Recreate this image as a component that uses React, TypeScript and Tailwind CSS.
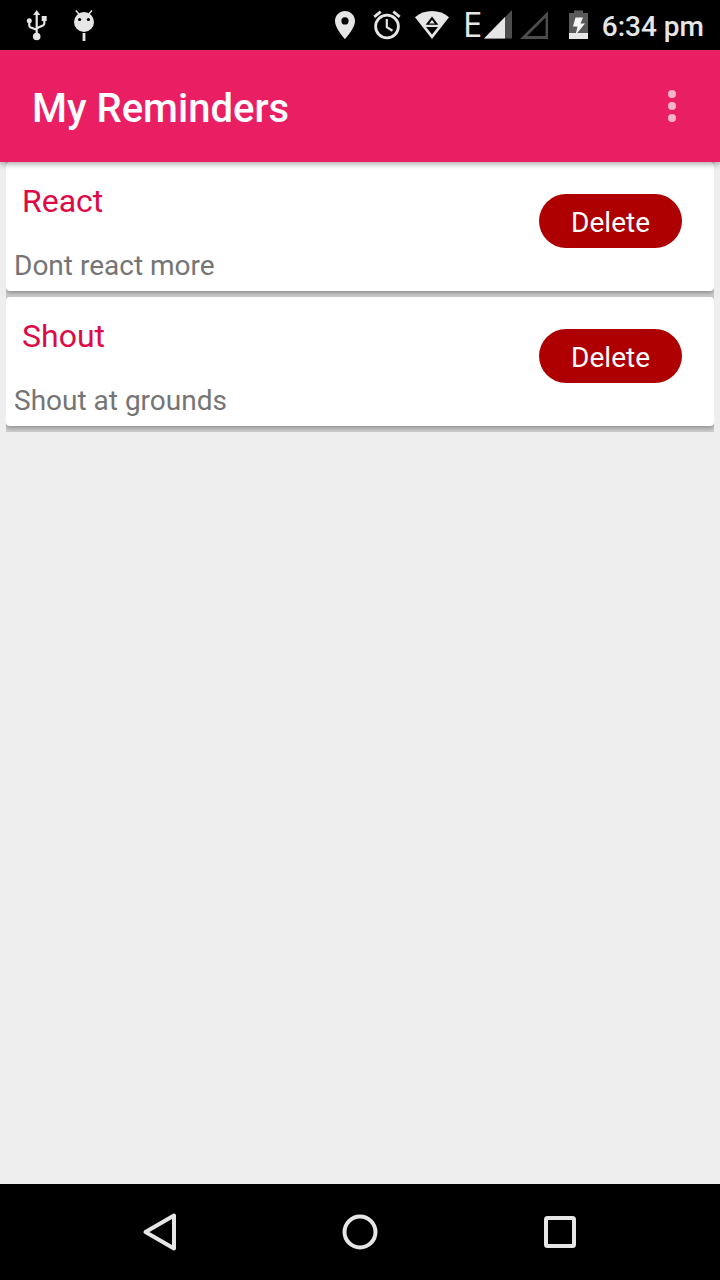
import { useState } from "react";

type Reminder = { id: number; title: string; note: string };

const initialReminders: Reminder[] = [
  { id: 1, title: "React", note: "Dont react more" },
  { id: 2, title: "Shout", note: "Shout at grounds" },
];

function StatusBar() {
  return (
    <div className="flex h-[50px] shrink-0 items-center bg-black pr-4 pl-6 text-[#e6e6e6]">
      <svg className="h-[50px] w-[26px]" viewBox="24 0 26 50" fill="none" stroke="currentColor" strokeWidth="2.2" aria-hidden="true">
        <path d="M36.7 14v20M29.3 21v4.5q0 1.2 1 1.7l6.2 2.6M44.300 19v4.500q0 1.200-1 1.700l-6.500 3" />
        <path d="M36.700 10l3.600 5h-7.200z" fill="currentColor" stroke="none" />
        <circle cx="29.300" cy="20.700" r="2.500" fill="currentColor" stroke="none" />
        <path d="M41.700 16h5v5h-5z" fill="currentColor" stroke="none" />
        <circle cx="36.700" cy="36.500" r="3.800" fill="currentColor" stroke="none" />
      </svg>
      <svg className="ml-[22px] h-[50px] w-6" viewBox="72 0 24 50" aria-hidden="true">
        <circle cx="84" cy="22" r="10" fill="currentColor" />
        <path d="M75.800 10.500l3.600 4M92 10.500l-3.600 4" stroke="currentColor" strokeWidth="1.500" />
        <path d="M84 33v8" stroke="currentColor" strokeWidth="2.800" />
        <circle cx="79.600" cy="19.500" r="1.600" fill="#000" />
        <circle cx="88.400" cy="19.500" r="1.600" fill="#000" />
      </svg>

      <svg className="ml-auto h-[50px] w-5" viewBox="335 0 20 50" fill="currentColor" aria-hidden="true">
        <path fillRule="evenodd" d="M345 11c-5.500 0-10 4.400-10 9.900C335 28.300 345 39 345 39s10-10.700 10-18.100c0-5.500-4.500-9.900-10-9.900zm0 6.300a3.600 3.600 0 1 1 0 7.200 3.600 3.600 0 0 1 0-7.200z" />
      </svg>
      <svg className="ml-[18px] h-[50px] w-7" viewBox="373 0 28 50" fill="none" stroke="currentColor" aria-hidden="true">
        <circle cx="387" cy="26.500" r="11.400" strokeWidth="2.800" />
        <path d="M374.300 16.800l6.400-5.100M399.700 16.800l-6.400-5.100" strokeWidth="2.800" />
        <path d="M386.800 19v8.200l5.700 3.600" strokeWidth="2.200" />
      </svg>
      <svg className="ml-[14px] h-[50px] w-[34px]" viewBox="415 0 34 50" aria-hidden="true">
        <path d="M432 39L415 17.200C419.700 13.200 425.600 11 432 11s12.300 2.200 17 6.200z" fill="currentColor" />
        <path d="M432 16.500l6.300 8.300h-12.600z" fill="#000" />
        <path d="M426 27h12l-6 7.500z" fill="#000" />
        <path d="M432 20l2.800 3.600h-5.600z" fill="currentColor" />
      </svg>
      <span className="ml-3.5 w-[21px] pb-0.5 font-['Open_Sans',sans-serif] text-[35px] leading-[48px] font-medium">E</span>
      <svg className="h-[50px] w-7" viewBox="484 0 28 50" aria-hidden="true">
        <path d="M484 38.500L512 10v28.500z" fill="#4d4d4d" />
        <path d="M484 38.500L505 17v21.500z" fill="currentColor" />
      </svg>
      <svg className="ml-2 h-[50px] w-7" viewBox="520 0 28 50" aria-hidden="true">
        <path d="M523.500 37.500L547 14.200v23.300z" fill="none" stroke="#4d4d4d" strokeWidth="2.800" />
      </svg>
      <svg className="ml-5 h-[50px] w-5" viewBox="568 0 20 50" aria-hidden="true">
        <path d="M569 13h5v-2.500h9V13h5v26h-19z" fill="#5a5a5a" />
        <path d="M569 33h19v6h-19z" fill="currentColor" />
        <path d="M575.500 17.500h7.500l-2.500 6h4.500l-9.500 11.500 2-8.500h-4.500z" fill="#f5f5f5" />
      </svg>
      <time className="ml-3.5 pt-[3px] text-[28px] leading-[47px] font-medium">6:34 pm</time>
    </div>
  );
}

function AppBar() {
  return (
    <header className="relative flex h-28 shrink-0 items-center justify-between bg-[#e91e63] pr-6 pl-8 shadow-[0_2px_6px_rgba(0,0,0,0.35)]">
      <h1 className="pt-1.5 text-[40px] leading-[48px] font-medium text-white">My Reminders</h1>
      <button type="button" aria-label="More options" className="flex h-16 w-12 items-center justify-center text-[#f8b4cc]">
        <svg className="h-8 w-2" viewBox="0 0 8 32" fill="currentColor" aria-hidden="true">
          <circle cx="4" cy="4" r="4" />
          <circle cx="4" cy="16" r="4" />
          <circle cx="4" cy="28" r="4" />
        </svg>
      </button>
    </header>
  );
}

function ReminderCard({ reminder, onDelete }: { reminder: Reminder; onDelete: () => void }) {
  return (
    <li className="overflow-hidden bg-[#cccccc] pb-1.5">
      <article className="flex items-start justify-between rounded-[4px] bg-white pr-8 pl-2 shadow-[0_2px_4px_rgba(0,0,0,0.3)]">
        <div className="pt-5 pb-2">
          <h2 className="pl-2 text-[32px] leading-[38px] text-[#dd0a47]">{reminder.title}</h2>
          <p className="pt-[29px] text-[28px] leading-[34px] text-[#757575]">{reminder.note}</p>
        </div>
        <button
          type="button"
          onClick={onDelete}
          className="mt-8 h-[54px] rounded-full bg-[#ae0000] px-8 pt-1 text-[28px] leading-[50px] text-white"
        >
          Delete
        </button>
      </article>
    </li>
  );
}

function NavigationBar() {
  return (
    <nav aria-label="System" className="flex h-24 shrink-0 items-center justify-center gap-[152px] bg-black text-[#e6e6e6]">
      <button type="button" aria-label="Back">
        <svg className="size-12" viewBox="0 0 48 48" fill="none" stroke="currentColor" strokeWidth="4" strokeLinejoin="round" aria-hidden="true">
          <path d="M9.500 24L38 7.500v33z" />
        </svg>
      </button>
      <button type="button" aria-label="Home">
        <svg className="size-12" viewBox="0 0 48 48" fill="none" stroke="currentColor" strokeWidth="4" aria-hidden="true">
          <circle cx="24" cy="24" r="15.500" />
        </svg>
      </button>
      <button type="button" aria-label="Recent apps">
        <svg className="size-12" viewBox="0 0 48 48" fill="none" stroke="currentColor" strokeWidth="4" aria-hidden="true">
          <rect x="10" y="10" width="28" height="28" rx="1.500" />
        </svg>
      </button>
    </nav>
  );
}

export default function App() {
  const [reminders, setReminders] = useState(initialReminders);

  return (
    <div className="flex min-h-screen flex-col bg-[#eeeeee] font-[Roboto,sans-serif]">
      <StatusBar />
      <AppBar />
      <main className="grow">
        <ul className="px-1.5">
          {reminders.map((reminder) => (
            <ReminderCard
              key={reminder.id}
              reminder={reminder}
              onDelete={() => setReminders((list) => list.filter((item) => item.id !== reminder.id))}
            />
          ))}
        </ul>
      </main>
      <NavigationBar />
    </div>
  );
}
